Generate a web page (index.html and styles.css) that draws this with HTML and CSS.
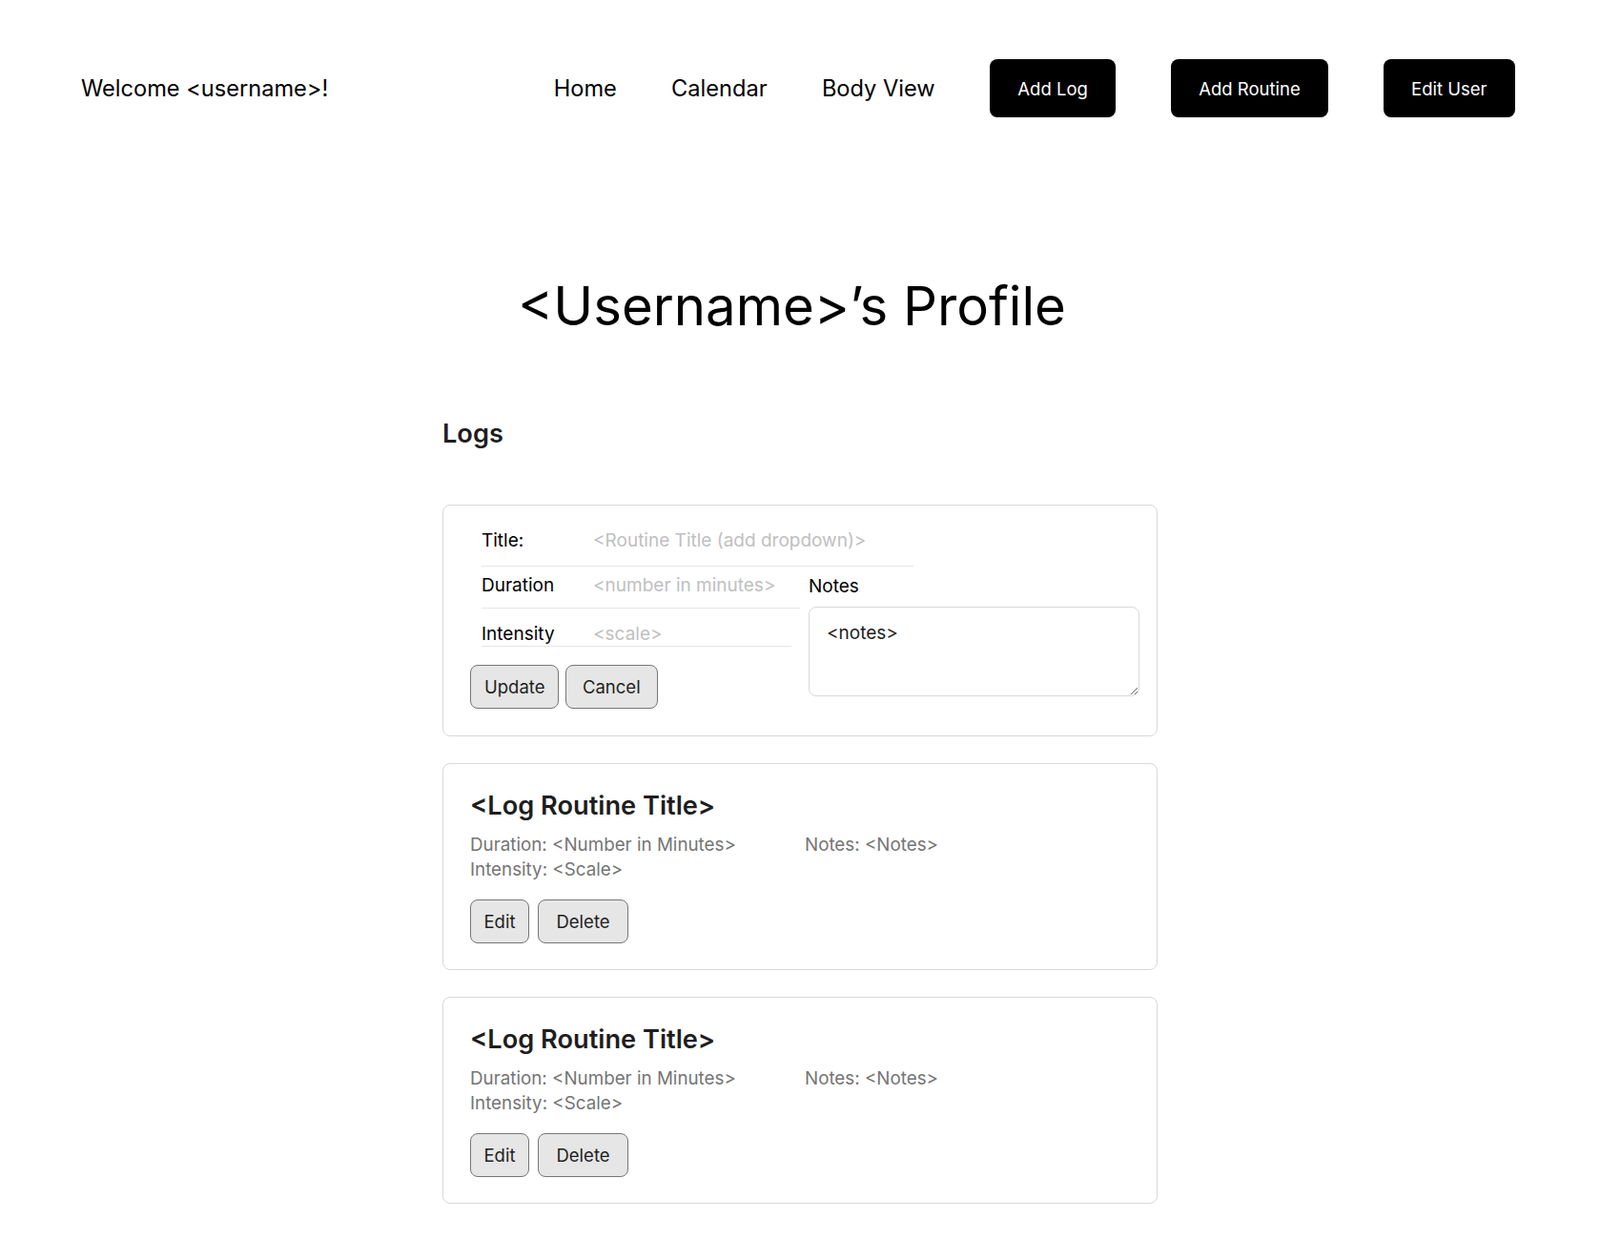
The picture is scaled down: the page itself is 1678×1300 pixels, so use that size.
FILE: index.html
```html
<!DOCTYPE html>
<html lang="en">
<head>
<meta charset="utf-8">
<title>Profile</title>
<link rel="stylesheet" href="styles.css">
</head>
<body>
<header class="topbar">
  <div class="welcome">Welcome &lt;username&gt;!</div>
  <nav class="nav">
    <a class="nav-link" href="#">Home</a>
    <a class="nav-link" href="#">Calendar</a>
    <a class="nav-link" href="#">Body View</a>
    <a class="nav-btn" href="#">Add Log</a>
    <a class="nav-btn" href="#">Add Routine</a>
    <a class="nav-btn" href="#">Edit User</a>
  </nav>
</header>

<main class="main">
  <h1 class="page-title">&lt;Username&gt;’s Profile</h1>
  <section class="logs">
    <h2 class="logs-title">Logs</h2>

    <div class="card edit-card">
      <div class="field field-title">
        <span class="field-label">Title:</span>
        <span class="field-ph">&lt;Routine Title (add dropdown)&gt;</span>
      </div>
      <div class="edit-body">
        <div class="edit-left">
          <div class="field field-dur">
            <span class="field-label">Duration</span>
            <span class="field-ph">&lt;number in minutes&gt;</span>
          </div>
          <div class="field field-int">
            <span class="field-label">Intensity</span>
            <span class="field-ph">&lt;scale&gt;</span>
          </div>
          <div class="btn-row">
            <button class="btn btn-update">Update</button>
            <button class="btn btn-cancel">Cancel</button>
          </div>
        </div>
        <div class="edit-notes">
          <div class="notes-label">Notes</div>
          <textarea class="notes-area">&lt;notes&gt;</textarea>
        </div>
      </div>
    </div>

    <div class="card log-card">
      <h3 class="log-title">&lt;Log Routine Title&gt;</h3>
      <div class="log-info">
        <div class="log-col">
          <div>Duration: &lt;Number in Minutes&gt;</div>
          <div>Intensity: &lt;Scale&gt;</div>
        </div>
        <div class="log-col">
          <div>Notes: &lt;Notes&gt;</div>
        </div>
      </div>
      <div class="btn-row">
        <button class="btn btn-edit">Edit</button>
        <button class="btn btn-delete">Delete</button>
      </div>
    </div>

    <div class="card log-card">
      <h3 class="log-title">&lt;Log Routine Title&gt;</h3>
      <div class="log-info">
        <div class="log-col">
          <div>Duration: &lt;Number in Minutes&gt;</div>
          <div>Intensity: &lt;Scale&gt;</div>
        </div>
        <div class="log-col">
          <div>Notes: &lt;Notes&gt;</div>
        </div>
      </div>
      <div class="btn-row">
        <button class="btn btn-edit">Edit</button>
        <button class="btn btn-delete">Delete</button>
      </div>
    </div>
  </section>
</main>
</body>
</html>
```

FILE: styles.css
```css
* { box-sizing: border-box; }

body {
  margin: 0;
  background: #ffffff;
  color: #000000;
  font-family: Inter, "Noto Sans", "Liberation Sans", sans-serif;
}

.topbar {
  display: flex;
  align-items: center;
  justify-content: space-between;
  padding: 62px 89px 0 85px;
}

.welcome {
  font-size: 23.6px;
  line-height: 61px;
}

.nav {
  display: flex;
  align-items: center;
  gap: 57.3px;
}

.nav-link {
  color: #000;
  text-decoration: none;
  font-size: 23.6px;
  line-height: 61px;
}

.nav-btn {
  display: flex;
  align-items: center;
  height: 61px;
  padding: 0 29.5px;
  background: #000;
  color: #fff;
  border-radius: 8px;
  text-decoration: none;
  font-size: 18.5px;
}

.main {
  width: 750px;
  margin: 0 auto;
  padding-bottom: 40px;
}

.page-title {
  margin: 164px 0 0;
  padding-right: 17px;
  text-align: center;
  font-size: 56.3px;
  font-weight: 400;
  line-height: 67px;
}

.logs-title {
  margin: 84px 0 0;
  font-size: 27.2px;
  font-weight: 600;
  color: #1e1e1e;
  line-height: 34px;
}

.card {
  border: 1px solid #d9d9d9;
  border-radius: 8px;
  background: #fff;
}

.edit-card {
  margin-top: 57px;
  padding: 26px 18px 28px 28px;
}

.field {
  display: flex;
  font-size: 19px;
  line-height: 22px;
  border-bottom: 1px solid #e6e6e6;
  margin-left: 12px;
}

.field-label {
  width: 117px;
  flex-shrink: 0;
}

.field-ph {
  color: #c0c0c0;
}

.field-title {
  width: 453px;
  padding-bottom: 15px;
}

.edit-body {
  display: flex;
}

.edit-left {
  width: 355px;
  flex-shrink: 0;
}

.field-dur {
  width: 334px;
  padding: 9px 0 12px;
}

.field-int {
  width: 325px;
  padding: 16px 0 1px;
}

.edit-card .btn-row {
  margin-top: 19px;
  gap: 6.5px;
}

.edit-notes {
  flex: 1;
  padding-top: 10px;
}

.notes-label {
  font-size: 19px;
  line-height: 22px;
  margin-bottom: 10px;
}

.notes-area {
  display: block;
  width: 100%;
  height: 94px;
  border: 1px solid #d9d9d9;
  border-radius: 8px;
  padding: 16px 18px;
  font-family: Inter, "Noto Sans", sans-serif;
  font-size: 19px;
  line-height: 22px;
  color: #1e1e1e;
  resize: vertical;
  outline: none;
}

.btn-row {
  display: flex;
}

.btn {
  height: 46px;
  border: 1px solid #767676;
  border-radius: 8px;
  background: #e6e6e6;
  color: #1e1e1e;
  font-family: Inter, "Noto Sans", sans-serif;
  font-size: 18.5px;
}

.btn-update { padding: 0 14px; }
.btn-cancel { padding: 0 17px; }
.btn-edit { padding: 0 13.5px; }
.btn-delete { padding: 0 18px; }

.log-card {
  margin-top: 28px;
  padding: 28px 28px 27px 28px;
}

.log-title {
  margin: 0;
  font-size: 27.2px;
  font-weight: 600;
  line-height: 32px;
  color: #1e1e1e;
}

.log-info {
  display: flex;
  margin-top: 12px;
  font-size: 18.8px;
  line-height: 26px;
  color: #757575;
}

.log-col:first-child {
  width: 351px;
}

.log-card .btn-row {
  margin-top: 18px;
  gap: 9.5px;
}
```
